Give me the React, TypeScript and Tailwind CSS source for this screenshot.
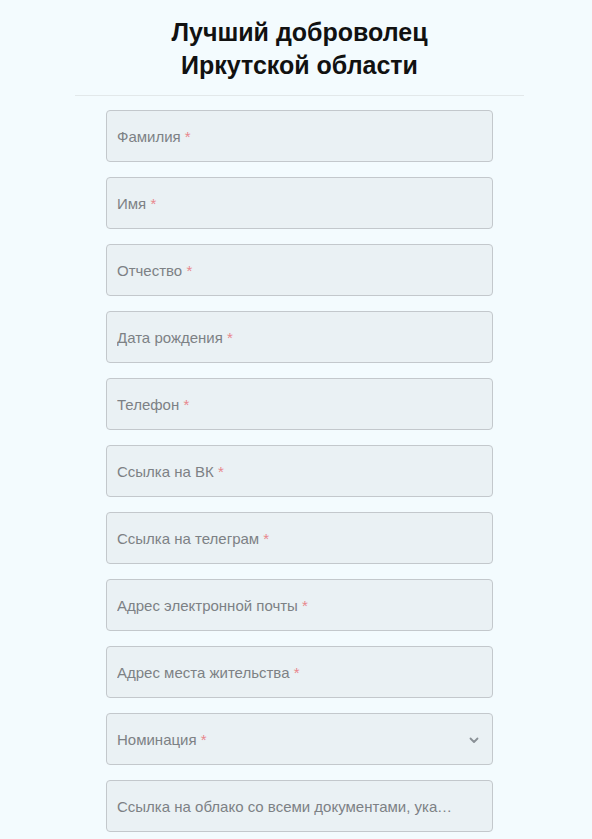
import React from "react";

type Field = { label: string; required?: boolean; select?: boolean };

const fields: Field[] = [
    { label: "Фамилия", required: true },
    { label: "Имя", required: true },
    { label: "Отчество", required: true },
    { label: "Дата рождения", required: true },
    { label: "Телефон", required: true },
    { label: "Ссылка на ВК", required: true },
    { label: "Ссылка на телеграм", required: true },
    { label: "Адрес электронной почты", required: true },
    { label: "Адрес места жительства", required: true },
    { label: "Номинация", required: true, select: true },
    { label: "Ссылка на облако со всеми документами, указанными в положении" },
];

function FormField({ field }: { field: Field }) {
    return (
        <div className="flex h-[52px] w-full items-center rounded-[4px] border border-[#c3c8cc] bg-[#eaf1f4] pt-[2px] pl-[10px] pr-[12px]">
            <span className="min-w-0 flex-1 truncate pr-[22px] text-[15px] text-[#7d8185]">
                {field.label}
                {field.required && <span className="text-[#e8878c]"> *</span>}
            </span>
            {field.select && (
                <svg width="12" height="12" viewBox="0 0 12 12" className="-ml-[11px] shrink-0 text-[#8a9096]">
                    <path d="M2.5 4.5 6 8l3.5-3.5" fill="none" stroke="currentColor" strokeWidth="1.8" strokeLinecap="round" strokeLinejoin="round" />
                </svg>
            )}
        </div>
    );
}

export default function App() {
    return (
        <div className="min-h-[839px] w-full bg-[#f3fbfe] pl-[7px] font-['Liberation_Sans',Arial,sans-serif]">
            <div className="mx-auto w-[449px] pt-[16px]">
                <h1 className="text-center text-[25px] font-bold leading-[33px] text-[#111]">
                    Лучший доброволец
                    <br />
                    Иркутской области
                </h1>
                <div className="mt-[13px] border-t border-[#e2e8ea]" />
                <div className="mx-auto flex w-[387px] flex-col gap-[15px] pt-[14px] pb-6">
                    {fields.map((field) => (
                        <FormField field={field} key={field.label} />
                    ))}
                </div>
            </div>
        </div>
    );
}
